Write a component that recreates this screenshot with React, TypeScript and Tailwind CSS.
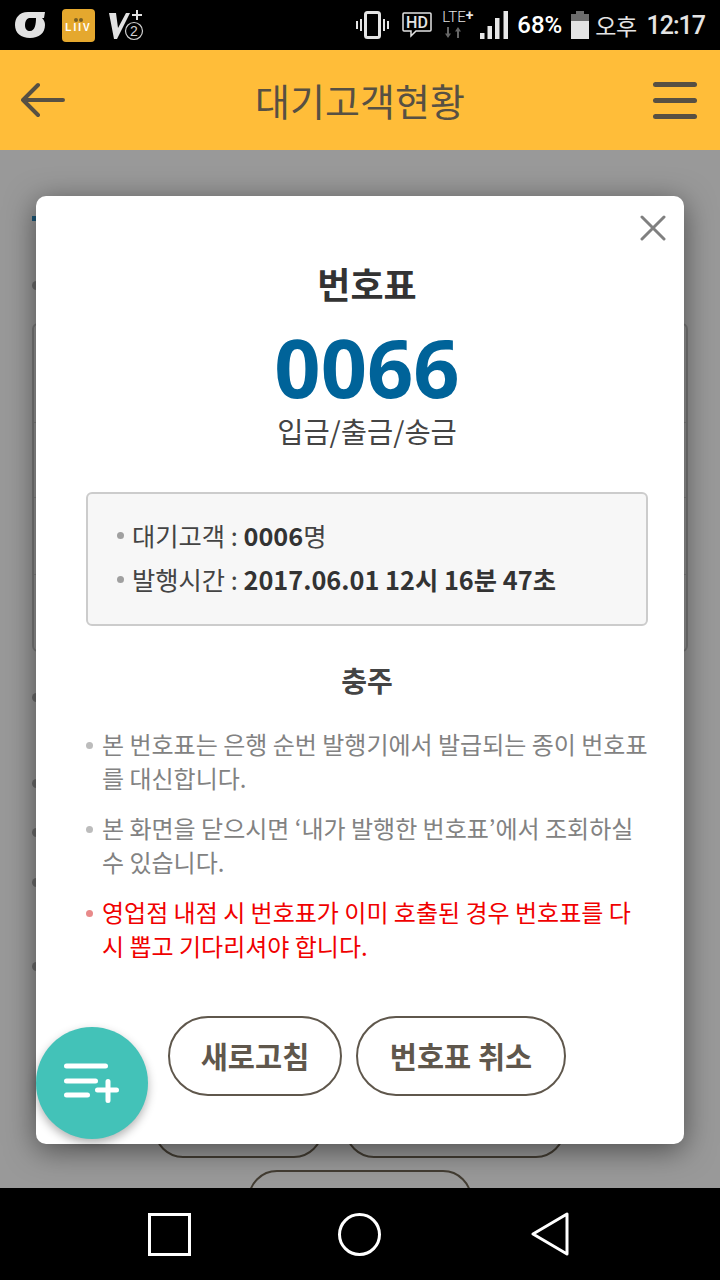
const font = { fontFamily: '"Noto Sans CJK KR", "Noto Sans", sans-serif' };
const roboto = { fontFamily: '"Roboto", sans-serif' };

function StatusBar() {
  return (
    <div className="flex h-[50px] items-center justify-between bg-black pr-[15px] pl-[15px] text-[#e4e4e4]">
      <div className="flex items-center">
        <svg width="30" height="28" viewBox="0 0 30 28">
          <path
            fillRule="evenodd"
            fill="#e2e2e2"
            d="M30 1 H13 C4 1 0 7 0 14 C0 22 6 27 15 27 C24 27 30 22 30 14 C30 11 29 9 27 7 H21 C21 13 20 20 15 20 C12 20 10 18 10 14 C10 11 11 8 14 7 H29 Z"
          />
        </svg>
        <div className="ml-[17px] flex h-[33px] w-[33px] flex-col items-center justify-center rounded-[4px] bg-[#e5a82e] text-white">
          <div className="mb-[1px] flex gap-[1px]">
            <span className="h-[4px] w-[4px] rounded-full bg-[#7a5f22]" />
            <span className="h-[4px] w-[4px] rounded-full bg-[#7a5f22]" />
          </div>
          <span className="text-[10px] leading-[10px] font-bold tracking-[2px]" style={{ fontFamily: '"Liberation Sans", sans-serif' }}>LIIV</span>
        </div>
        <svg className="ml-[14px]" width="36" height="34" viewBox="0 0 36 34" fill="none">
          <path d="M0 5 H7 L9 20 L17 5 H21 L8 31 H5 Z" fill="#e2e2e2" />
          <path d="M28 2 V12 M23 7 H33" stroke="#e2e2e2" strokeWidth="2" />
          <circle cx="25" cy="23" r="8.500" fill="#000" stroke="#d0d0d0" strokeWidth="1.200" />
          <text x="25" y="28" fontSize="14" textAnchor="middle" fill="#d0d0d0" fontFamily="Liberation Sans">2</text>
        </svg>
      </div>
      <div className="flex items-center">
        <svg width="34" height="30" viewBox="0 0 34 30" fill="none" stroke="#e4e4e4">
          <rect x="10.500" y="2.500" width="14" height="25" rx="2" strokeWidth="3" />
          <path d="M6 9 V21 M2 11 V19 M29 9 V21 M33 11 V19" strokeWidth="2" />
        </svg>
        <svg className="ml-[13px]" width="30" height="26" viewBox="0 0 30 26" fill="none">
          <path d="M2 1 H28 Q29 1 29 2 V18 Q29 19 28 19 H14 L9 24 V19 H2 Q1 19 1 18 V2 Q1 1 2 1 Z" stroke="#e4e4e4" strokeWidth="1.500" />
          <text x="15" y="15.500" fontSize="16" fontWeight="500" textAnchor="middle" fill="#e4e4e4" fontFamily="Roboto">HD</text>
        </svg>
        <div className="ml-[10px] flex h-[28px] w-[33px] flex-col">
          <div className="flex h-[13px] items-start text-[15px] leading-[13px] font-light whitespace-nowrap" style={roboto}>
            LTE<span className="ml-[0px] text-[14px] leading-[8px] font-bold">+</span>
          </div>
          <svg className="mt-[3px] ml-[3px]" width="16" height="11" viewBox="0 0 16 11" fill="#666">
            <path d="M3 11 L6 6.500 H4 V0 H2 V6.500 H0 Z" />
            <path d="M13 0 L16 4.500 H14 V11 H12 V4.500 H10 Z" />
          </svg>
        </div>
        <svg className="ml-[5px]" width="28" height="28" viewBox="0 0 28 28" fill="#e8e8e8">
          <rect x="0" y="22" width="4.500" height="6" />
          <rect x="7.500" y="15" width="4.500" height="13" />
          <rect x="15" y="7" width="4.500" height="21" />
          <rect x="23.500" y="0" width="4.500" height="28" />
        </svg>
        <span className="ml-[9px] text-[24px] leading-none font-medium text-white" style={roboto}>68%</span>
        <svg className="ml-[9px]" width="18" height="28" viewBox="0 0 18 28">
          <rect x="5" y="0" width="8" height="3" fill="#6e6e6e" />
          <rect x="0" y="3" width="18" height="7" fill="#6e6e6e" />
          <rect x="0" y="10" width="18" height="18" fill="#e4e4e4" />
        </svg>
        <span className="ml-[6px] text-[23px] leading-none tracking-[-0.500px]" style={font}>오후</span>
        <span className="ml-[10px] text-[25px] leading-none font-medium tracking-[-1px]" style={roboto}>12:17</span>
      </div>
    </div>
  );
}

function Header() {
  return (
    <div className="flex h-[100px] items-center justify-between bg-[#ffbd39] pr-[23px] pl-[21px]">
      <svg width="46" height="36" viewBox="0 0 46 36" fill="none" stroke="#575043" strokeWidth="4" strokeLinecap="round" strokeLinejoin="round">
        <path d="M42 18 H2 M17 3 L2 18 L17 33" />
      </svg>
      <h1 className="text-[38px] leading-none text-[#575043]">대기고객현황</h1>
      <div className="flex w-[44px] flex-col gap-[11px]">
        <span className="h-[5px] rounded-full bg-[#575043]" />
        <span className="h-[5px] rounded-full bg-[#575043]" />
        <span className="h-[5px] rounded-full bg-[#575043]" />
      </div>
    </div>
  );
}

// 모달 뒤에 살짝 보이는 페이지 내용
function BackgroundPage() {
  return (
    <div className="relative h-[1038px] overflow-hidden bg-[#999999] px-[32px]">
      <div className="mt-[66px] h-[5px] w-[4px] bg-[#1c5878]" />
      <div className="mt-[60px] h-[9px] w-[9px] rounded-full bg-[#6e6e6e]" />
      <div className="mt-[33px] flex h-[329px] flex-col rounded-[6px] border-2 border-[#7c7c7c]">
        <div className="h-[98px] border-b border-[#858585]" />
        <div className="h-[75px] border-b border-[#858585]" />
        <div className="h-[77px] border-b border-[#858585]" />
      </div>
      <div className="mt-[41px] h-[9px] w-[9px] rounded-full bg-[#6e6e6e]" />
      <div className="mt-[77px] h-[9px] w-[9px] rounded-full bg-[#6e6e6e]" />
      <div className="mt-[40px] h-[9px] w-[9px] rounded-full bg-[#6e6e6e]" />
      <div className="mt-[41px] h-[9px] w-[9px] rounded-full bg-[#6e6e6e]" />
      <div className="mt-[75px] h-[9px] w-[9px] rounded-full bg-[#6e6e6e]" />
      <div className="absolute top-[950px] left-[154px] flex gap-[22px]">
        <div className="h-[58px] w-[169px] rounded-[29px] border-2 border-[#433d33]" />
        <div className="h-[58px] w-[220px] rounded-[29px] border-2 border-[#433d33]" />
      </div>
      <div className="absolute top-[1020px] left-[248px] h-[58px] w-[224px] rounded-[29px] border-2 border-[#433d33]" />
    </div>
  );
}

function Note({ children, red }: { children: React.ReactNode; red?: boolean }) {
  return (
    <li className={`flex text-[24px] leading-[34px] ${red ? "text-[#f00000]" : "text-[#828282]"}`}>
      <span className={`mt-[15px] mr-[9px] h-[7px] w-[7px] shrink-0 rounded-full ${red ? "bg-[#e88a8a]" : "bg-[#bcbcbc]"}`} />
      <span>{children}</span>
    </li>
  );
}

function TicketModal() {
  return (
    <div className="absolute top-[196px] left-[36px] flex h-[948px] w-[648px] flex-col rounded-[10px] bg-white pr-[36px] pl-[50px] shadow-[0_6px_30px_rgba(0,0,0,0.5)]">
      <svg className="absolute top-[19px] right-[18px]" width="26" height="26" viewBox="0 0 26 26" fill="none" stroke="#808080" strokeWidth="3" strokeLinecap="round">
        <path d="M2 2 L24 24 M24 2 L2 24" />
      </svg>
      <h2 className="mt-[64px] text-center text-[36px] leading-[46px] font-bold text-[#333333]">번호표</h2>
      <div className="mt-[21px] text-center text-[81px] leading-[80px] font-bold text-[#006399]" style={{ fontFamily: '"Noto Sans", sans-serif' }}>0066</div>
      <div className="mt-[4px] text-center text-[28.500px] leading-[40px] text-[#444444]">입금/출금/송금</div>
      <div className="mt-[41px] h-[134px] rounded-[6px] border-2 border-[#cccccc] bg-[#f7f7f7] pt-[19px] pl-[29px] text-[25.300px] leading-[44px] text-[#444444]">
        <div className="flex items-center">
          <span className="mr-[8px] h-[7px] w-[7px] rounded-full bg-[#a0a0a0]" />
          대기고객 :&nbsp;<b className="font-bold text-[#333333]">0006</b>명
        </div>
        <div className="flex items-center">
          <span className="mr-[8px] h-[7px] w-[7px] rounded-full bg-[#a0a0a0]" />
          발행시간 :&nbsp;<b className="font-bold text-[#333333]">2017.06.01 12시 16분 47초</b>
        </div>
      </div>
      <h3 className="mt-[33px] text-center text-[28px] leading-[42px] font-bold text-[#444444]">충주</h3>
      <ul className="mt-[26px] flex flex-col gap-[16px]">
        <Note>본 번호표는 은행 순번 발행기에서 발급되는 종이 번호표를 대신합니다.</Note>
        <Note>본 화면을 닫으시면 ‘내가 발행한 번호표’에서 조회하실 수 있습니다.</Note>
        <Note red>영업점 내점 시 번호표가 이미 호출된 경우 번호표를 다시 뽑고 기다리셔야 합니다.</Note>
      </ul>
      <div className="mt-[53px] flex justify-center gap-[14px]">
        <button className="h-[80px] w-[174px] rounded-[40px] border-2 border-[#5f574c] pb-[2px] text-[29.500px] font-bold text-[#5f574c]">새로고침</button>
        <button className="h-[80px] w-[210px] rounded-[40px] border-2 border-[#5f574c] pb-[2px] text-[29.500px] font-bold text-[#5f574c]">번호표 취소</button>
      </div>
    </div>
  );
}

function Fab() {
  return (
    <button className="absolute top-[1027px] left-[36px] flex h-[112px] w-[112px] items-center justify-center rounded-full bg-[#43c2b8] shadow-[0_4px_10px_rgba(0,0,0,0.3)]">
      <svg width="58" height="42" viewBox="0 0 58 42" fill="none" stroke="#fff" strokeWidth="5" strokeLinecap="round">
        <path d="M3.500 4 H42.500 M3.500 19 H32.500 M3.500 33 H24.500 M34.500 28 H53.500 M45 19.500 V38.500" />
      </svg>
    </button>
  );
}

function NavBar() {
  return (
    <div className="flex h-[92px] items-center bg-black pl-[148px]">
      <div className="h-[43px] w-[43px] border-[3px] border-white" />
      <div className="ml-[147px] h-[43px] w-[43px] rounded-full border-[3px] border-white" />
      <svg className="ml-[150px]" width="38" height="44" viewBox="0 0 38 44" fill="none" stroke="#fff" strokeWidth="3" strokeLinejoin="round">
        <path d="M36 2 V42 L2 22 Z" />
      </svg>
    </div>
  );
}

export default function App() {
  return (
    <div className="relative h-[1280px] w-[720px] overflow-hidden bg-black" style={font}>
      <StatusBar />
      <Header />
      <BackgroundPage />
      <NavBar />
      <TicketModal />
      <Fab />
    </div>
  );
}
